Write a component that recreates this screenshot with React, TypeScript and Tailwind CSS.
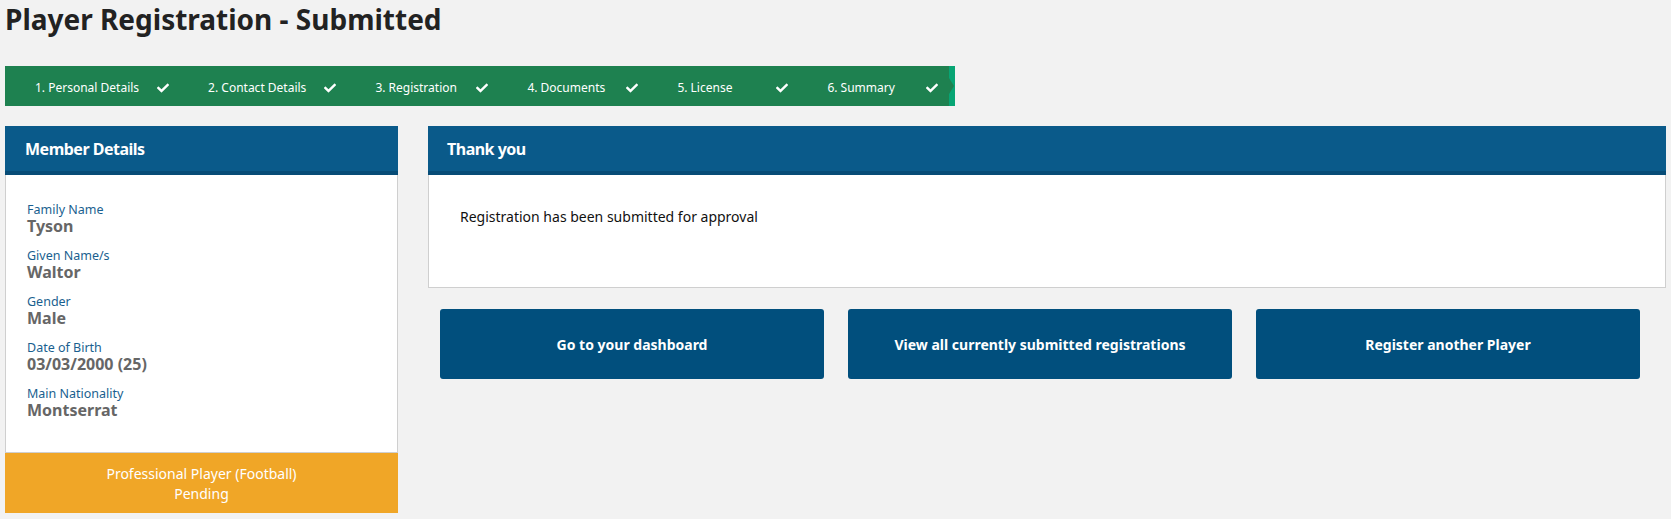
import React from "react";
import { FaCheck } from "react-icons/fa";

const steps = [
  "1. Personal Details",
  "2. Contact Details",
  "3. Registration",
  "4. Documents",
  "5. License",
  "6. Summary",
];

const details = [
  { label: "Family Name", value: "Tyson" },
  { label: "Given Name/s", value: "Waltor" },
  { label: "Gender", value: "Male" },
  { label: "Date of Birth", value: "03/03/2000 (25)" },
  { label: "Main Nationality", value: "Montserrat" },
];

const buttons = [
  "Go to your dashboard",
  "View all currently submitted registrations",
  "Register another Player",
];

export default function App() {
  return (
    <div className="min-h-screen bg-[#f2f2f2] px-[5px] font-['Noto_Sans',sans-serif] text-[#222]">
      <h1 className="pt-[1px] text-[28px] font-bold leading-[36px] text-[#222]">
        Player Registration - Submitted
      </h1>

      <div className="mt-[29px] flex h-[40px] w-[950px]">
        <div className="flex flex-1 items-center overflow-hidden bg-[#1e8150] pl-[7px] pt-[4px]">
          {steps.map((s, i) => (
            <div
              key={s}
              className={`flex shrink-0 items-center justify-between gap-[18px] whitespace-nowrap pl-[23px] pr-[16px] text-[12px] leading-[18px] text-white ${
                i < 3 ? "min-w-[152px]" : "min-w-[150px]"
              }`}
            >
              <span>{s}</span>
              <FaCheck className="h-[12px] w-[12px] shrink-0" />
            </div>
          ))}
        </div>
        <div className="flex w-[6px] items-center bg-[#07a574]">
          <div className="h-0 w-0 border-y-[8px] border-l-[5px] border-y-transparent border-l-[#1e8150]" />
        </div>
      </div>

      <div className="mt-[20px] flex gap-[30px]">
        <div className="flex w-[393px] shrink-0 flex-col">
          <div className="flex h-[49px] items-center border-b-[4px] border-[#074c77] bg-[#0a5a8a] pl-[20px] text-[16px] font-bold tracking-[-0.5px] text-white">
            Member Details
          </div>
          <div className="flex flex-col gap-[10px] border-x border-b border-[#cfcfcf] bg-white pb-[32px] pl-[21px] pt-[25px]">
            {details.map((d) => (
              <div key={d.label} className="flex flex-col">
                <span className="pt-[3px] text-[12.5px] leading-[14px] text-[#1a5f8f]">{d.label}</span>
                <span className="text-[16px] font-bold leading-[19px] text-[#666]">{d.value}</span>
              </div>
            ))}
          </div>
          <div className="flex flex-col items-center bg-[#f0a627] pb-[9px] pt-[11px] text-[14px] leading-[20px] text-white">
            <span>Professional Player (Football)</span>
            <span>Pending</span>
          </div>
        </div>

        <div className="flex flex-1 flex-col">
          <div className="flex h-[49px] items-center border-b-[4px] border-[#074c77] bg-[#0a5a8a] pl-[19px] text-[16px] font-bold tracking-[-0.5px] text-white">
            Thank you
          </div>
          <div className="border-x border-b border-[#cfcfcf] bg-white pb-[60px] pl-[31px] pt-[32px] text-[14px] leading-[20px] text-[#111]">
            Registration has been submitted for approval
          </div>
          <div className="mt-[21px] grid grid-cols-[384px_384px_384px] gap-[24px] pl-[12px]">
            {buttons.map((b) => (
              <div
                key={b}
                className="flex h-[70px] items-center justify-center rounded-[3px] bg-[#014f7d] text-[14px] font-bold text-white"
              >
                {b}
              </div>
            ))}
          </div>
        </div>
      </div>
    </div>
  );
}
